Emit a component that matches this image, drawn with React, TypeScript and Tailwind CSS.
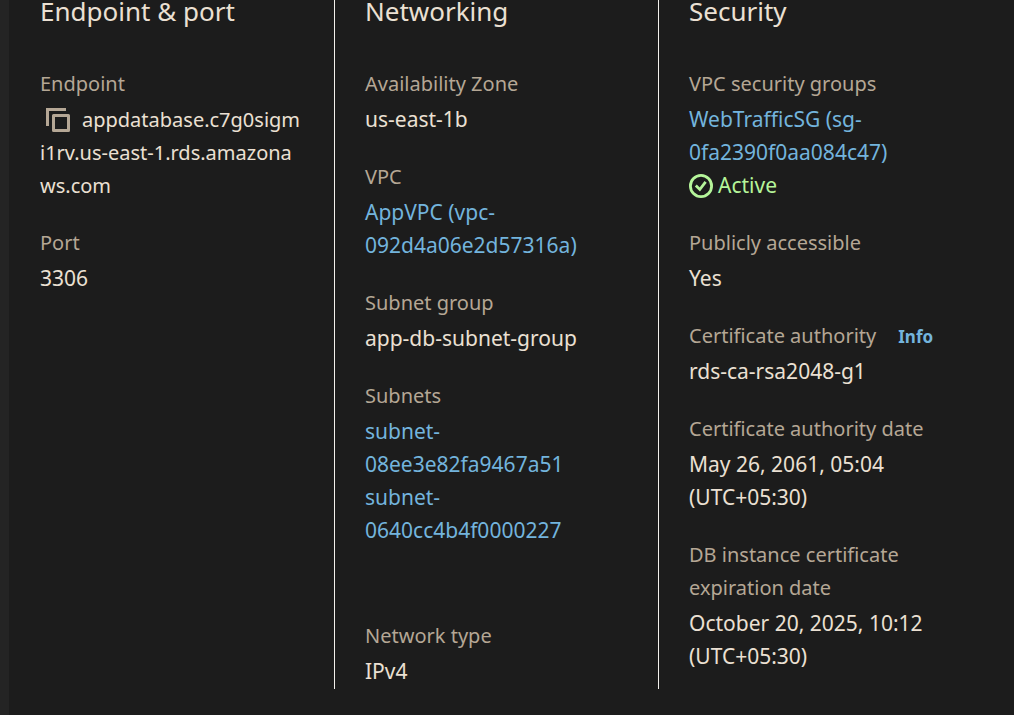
import type { ReactNode } from "react";

function Column({ title, divided, children }: { title: string; divided?: boolean; children: ReactNode }) {
  return (
    <section className={divided ? "border-l border-[#f2f0ec] px-[30px] pb-px" : "px-[30px] pb-px"}>
      <h2 className="text-[26px] leading-[22px] text-[#ebe0d3]">{title}</h2>
      <dl className="mt-[45px] flex flex-col gap-6">{children}</dl>
    </section>
  );
}

function Field({ label, info, children }: { label: string; info?: boolean; children: ReactNode }) {
  return (
    <div className="flex flex-col gap-[3px]">
      <dt className="text-[#b5a795]">
        {label}
        {info && (
          <a href="#info" className="ml-[22px] text-[17px] leading-none font-bold text-[#73b4dd]">
            Info
          </a>
        )}
      </dt>
      <dd className="text-[21px] text-[#ebe0d3]">{children}</dd>
    </div>
  );
}

function TextLink({ href, children }: { href: string; children: ReactNode }) {
  return (
    <a href={href} className="block text-[#73b4dd] hover:underline">
      {children}
    </a>
  );
}

function CopyIcon() {
  return (
    <svg width="24" height="24" viewBox="0 0 24 24" fill="none" stroke="currentColor" strokeWidth="3" aria-hidden="true">
      <path d="M1.5 18V1.5H20" />
      <path d="M7.5 7.5h15v15h-15z" strokeLinejoin="round" />
    </svg>
  );
}

function CheckIcon() {
  return (
    <svg width="24" height="24" viewBox="0 0 24 24" fill="none" stroke="currentColor" aria-hidden="true">
      <circle cx="12" cy="12" r="10.6" strokeWidth="2.8" />
      <path d="M6.8 11.6l4 3.9 5.8-7.6" strokeWidth="2.8" />
    </svg>
  );
}

export default function App() {
  return (
    <main className="min-h-screen bg-[#1c1c1c] border-l-9 border-[#242424] pl-px pr-8 font-['Noto_Sans',sans-serif] text-[20px] leading-[33px]">
      <div className="grid grid-cols-3">
        <Column title="Endpoint & port">
          <Field label="Endpoint">
            <div className="break-all text-[20px]">
              <button type="button" aria-label="Copy endpoint" className="ml-1.5 mr-3 inline-flex h-[33px] items-center align-top text-[#b5a795]">
                <CopyIcon />
              </button>
              appdatabase.c7g0sigmi1rv.us-east-1.rds.amazonaws.com
            </div>
          </Field>
          <Field label="Port">3306</Field>
        </Column>

        <Column title="Networking" divided>
          <Field label="Availability Zone">us-east-1b</Field>
          <Field label="VPC">
            <TextLink href="#vpc">AppVPC (vpc-<wbr />092d4a06e2d57316a)</TextLink>
          </Field>
          <Field label="Subnet group">app-db-subnet-group</Field>
          <Field label="Subnets">
            <div className="pb-12">
              <TextLink href="#subnet-1">subnet-<wbr />08ee3e82fa9467a51</TextLink>
              <TextLink href="#subnet-2">subnet-<wbr />0640cc4b4f0000227</TextLink>
            </div>
          </Field>
          <Field label="Network type">IPv4</Field>
        </Column>

        <Column title="Security" divided>
          <Field label="VPC security groups">
            <TextLink href="#security-group">WebTrafficSG (sg-<wbr />0fa2390f0aa084c47)</TextLink>
            <span className="flex items-center gap-[5px] text-[#b5f59a]">
              <CheckIcon />
              Active
            </span>
          </Field>
          <Field label="Publicly accessible">Yes</Field>
          <Field label="Certificate authority" info>
            rds-ca-rsa2048-g1
          </Field>
          <Field label="Certificate authority date">May 26, 2061, 05:04 (UTC+05:30)</Field>
          <Field label="DB instance certificate expiration date">October 20, 2025, 10:12 (UTC+05:30)</Field>
        </Column>
      </div>
    </main>
  );
}
